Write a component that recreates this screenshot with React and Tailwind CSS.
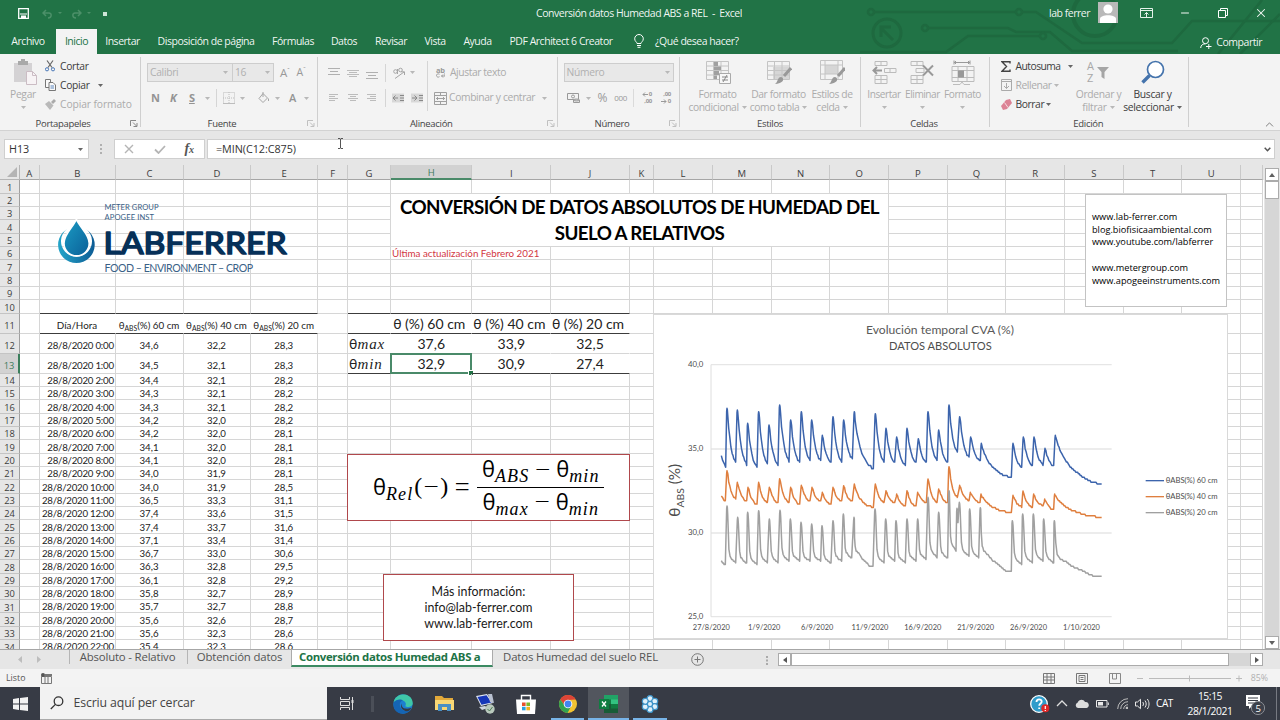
import React from "react";
import { Minus, X, ChevronUp } from "lucide-react";

const COLS = [
  ["A", "w-[19.5px]"], ["B", "w-[76.7px]"], ["C", "w-[67.5px]"], ["D", "w-[67.3px]"], ["E", "w-[67.2px]"],
  ["F", "w-[29.8px]"], ["G", "w-[43px]"], ["H", "w-[81.4px]"], ["I", "w-[78.8px]"], ["J", "w-[78.5px]"],
  ["K", "w-[24.5px]"], ["L", "w-[58.7px]"], ["M", "w-[58.7px]"], ["N", "w-[58.7px]"], ["O", "w-[58.7px]"],
  ["P", "w-[58.7px]"], ["Q", "w-[58.7px]"], ["R", "w-[58.7px]"], ["S", "w-[58.7px]"], ["T", "w-[58.7px]"],
  ["U", "w-[58.7px]"], ["", "w-[22.2px]"],
];

const DATA = [
  ["34,6", "32,2", "28,3"], ["34,5", "32,1", "28,3"], ["34,4", "32,1", "28,2"], ["34,3", "32,1", "28,2"],
  ["34,3", "32,1", "28,2"], ["34,2", "32,0", "28,2"], ["34,2", "32,0", "28,1"], ["34,1", "32,0", "28,1"],
  ["34,1", "32,0", "28,1"], ["34,0", "31,9", "28,1"], ["34,0", "31,9", "28,5"], ["36,5", "33,3", "31,1"],
  ["37,4", "33,6", "31,5"], ["37,4", "33,7", "31,6"], ["37,1", "33,4", "31,4"], ["36,7", "33,0", "30,6"],
  ["36,3", "32,8", "29,5"], ["36,1", "32,8", "29,2"], ["35,8", "32,7", "28,9"], ["35,7", "32,7", "28,8"],
  ["35,6", "32,6", "28,7"], ["35,6", "32,3", "28,6"], ["35,4", "32,3", "28,6"],
];

const SUMMARY = {
  11: { H: "θ (%) 60 cm", I: "θ (%) 40 cm", J: "θ (%) 20 cm" },
  12: { H: "37,6", I: "33,9", J: "32,5" },
  13: { H: "32,9", I: "30,9", J: "27,4" },
};

// each entry: [x of base, y of base, x of peak, y of peak]
const S60 = [[227,379,231,205],[257,368,262,210],[290,374,293,250],[321,383,326,215],[352,373,357,255],[384,374,389,195],[417,364,422,240],[449,368,454,215],[480,363,485,240],[512,363,517,286],[543,368,549,230],[575,368,581,240],[607,358,613,215],[670,387,676,221],[702,368,708,265],[734,368,740,291],[766,377,771,265],[798,368,805,296],[829,368,834,215],[861,363,866,270],[893,368,897,195],[922,338,929,230],[957,353,962,291],[991,363,994,310],[1084,412,1089,310],[1115,383,1120,291],[1147,378,1152,291],[1179,374,1185,325],[1211,378,1216,286]];
const S40 = [[226,484,231,392],[257,478,262,427],[290,484,294,442],[321,494,326,427],[352,488,358,442],[384,488,389,416],[417,488,422,442],[449,494,454,436],[480,484,486,442],[512,484,517,457],[543,494,549,442],[575,484,581,437],[607,484,613,432],[670,503,676,432],[702,488,708,452],[734,488,740,462],[766,499,771,452],[798,499,803,457],[829,488,834,417],[861,488,866,447],[893,488,897,380],[922,473,929,436],[957,483,961,457],[990,488,993,462],[1084,518,1089,466],[1115,500,1119,453],[1147,503,1151,462],[1179,497,1184,477],[1211,509,1214,462]];
const S20 = [[226,674,231,498],[257,669,263,532],[290,669,293,517],[321,674,326,512],[352,668,358,537],[384,668,390,511],[417,663,421,537],[449,663,453,547],[480,663,485,552],[512,663,516,557],[543,669,549,542],[575,663,580,522],[605,654,612,532],[669,679,675,507],[702,668,707,537],[734,663,738,542],[766,668,771,537],[798,663,803,537],[828,657,834,472],[861,653,866,517],[893,654,897,452],[918,633,921,505],[924,550,928,487],[957,648,959,507],[986,653,991,503],[1084,694,1087,542],[1115,673,1118,522],[1147,668,1150,522],[1179,663,1181,537],[1211,668,1213,542]];

const SLOW = [[0.1, 0.14], [0.2, 0.38], [0.32, 0.54], [0.45, 0.7], [0.6, 0.82], [0.78, 0.93], [0.92, 0.96], [1, 1]];
const FAST = [[0.08, 0.14], [0.16, 0.5], [0.22, 0.75], [0.35, 0.87], [0.55, 0.93], [0.75, 0.96], [1, 1]];
const LONG = [[0.04, 0.15], [0.1, 0.3], [0.18, 0.45], [0.3, 0.62], [0.4, 0.72], [0.5, 0.78], [0.6, 0.86], [0.75, 0.94], [0.86, 0.95], [0.92, 1], [1, 1]];
const LONG_FAST = [[0.03, 0.4], [0.06, 0.6], [0.11, 0.68], [0.25, 0.74], [0.4, 0.83], [0.6, 0.9], [0.75, 0.97], [0.86, 1], [1, 1]];

// readings have one decimal, so the curve moves in steps of 0,1 %
const STEP = 5.04;
const snap = (y) => 74 + Math.round((y - 74) / STEP) * STEP;

function trace(start, events, end, fast) {
  let d = `M${start[0]} ${start[1]}`;
  let prev = start;
  const fall = (to, first) => {
    const gap = to[0] - prev[0];
    const shape = first ? [[0.3, 0.4], [0.7, 0.8], [1, 1]] : gap > 50 ? (fast ? LONG_FAST : LONG) : fast ? FAST : SLOW;
    let t0 = 0;
    let f0 = 0;
    shape.forEach(([t, f]) => {
      const n = Math.max(1, Math.round(((t - t0) * gap) / 3));
      for (let k = 1; k <= n; k++) {
        const tt = t0 + ((t - t0) * k) / n;
        const ff = f0 + ((f - f0) * k) / n;
        d += `L${(prev[0] + gap * tt).toFixed(1)} ${snap(prev[1] + (to[1] - prev[1]) * ff).toFixed(1)}`;
      }
      t0 = t;
      f0 = f;
    });
  };
  events.forEach(([bx, by, px, py], i) => {
    fall([bx, by], i === 0);
    d += `L${px - 1} ${py + 8}L${px} ${py}L${px + 1} ${py + 4}`;
    prev = [px, py];
  });
  fall(end, false);
  return d;
}

function Logo() {
  return (
    <svg className="absolute left-[56px] top-[36px]" width="234" height="76" viewBox="56 201 234 76">
      <defs>
        <linearGradient id="drop" x1="0" y1="0" x2="1" y2="1">
          <stop offset="0" stopColor="#1b9cc4" />
          <stop offset="1" stopColor="#0a5f98" />
        </linearGradient>
        <linearGradient id="ring" x1="0" y1="0" x2="1" y2="0">
          <stop offset="0" stopColor="#25a5c9" />
          <stop offset="1" stopColor="#0d5c95" />
        </linearGradient>
      </defs>
      <path d="M62.8 232.5A18.3 18.3 0 1 0 90 232.5L86 229A15.5 15.5 0 1 1 67 229Z" fill="url(#ring)" />
      <path d="M76.4 219.3C72.5 228.5 64 234 64 243.3A12.6 12.6 0 0 0 89.2 243.3C89.2 234 80.3 228.5 76.4 219.3Z" fill="url(#drop)" stroke="#fff" strokeWidth="1.6" />
      <g fontFamily="Lato, sans-serif" fill="#3a6186">
        <text x="104.5" y="209.5" fontSize="7.6" textLength="54">METER GROUP</text>
        <text x="104.5" y="220" fontSize="7.6" textLength="49.5">APOGEE INST</text>
        <text x="104.5" y="272.2" fontSize="10.6" textLength="148.5">FOOD – ENVIRONMENT – CROP</text>
        <text x="103.5" y="253.9" fontSize="31.5" fill="#063058" stroke="#063058" strokeWidth="1.7" strokeLinejoin="round" textLength="183" lengthAdjust="spacingAndGlyphs">LABFERRER</text>
      </g>
    </svg>
  );
}

function Chart() {
  const dates = ["27/8/2020", "1/9/2020", "6/9/2020", "11/9/2020", "16/9/2020", "21/9/2020", "26/9/2020", "1/10/2020"];
  return (
    <div className="absolute left-[653px] top-[149px] w-[575px] h-[325px] bg-white border border-[#d9d9d9]">
      <svg className="block" width="573" height="323" viewBox="12 -75 1719 969" fontFamily="Lato, sans-serif" fill="#4d4d4d">
        <text x="648" y="-19" fontSize="36" textLength="444" lengthAdjust="spacingAndGlyphs" fill="#595959">Evolución temporal CVA (%)</text>
        <text x="717" y="29" fontSize="35" textLength="308" lengthAdjust="spacingAndGlyphs">DATOS ABSOLUTOS</text>
        {[74, 327, 579, 830].map((y) => (
          <path key={y} d={`M183 ${y}H1385`} stroke="#e6e6e6" strokeWidth="4" />
        ))}
        <path d="M183 74V830" stroke="#dedede" strokeWidth="3" />
        {["40,0", "35,0", "30,0", "25,0"].map((t, i) => (
          <text key={t} x="114" y={81 + i * 252} fontSize="22" textLength="46" lengthAdjust="spacingAndGlyphs">{t}</text>
        ))}
        {dates.map((t, i) => (
          <text key={t} x={184 + i * 158.6} y="869" fontSize="22" textAnchor="middle" textLength={t.length === 9 ? 111 : 97} lengthAdjust="spacingAndGlyphs">{t}</text>
        ))}
        <text transform="translate(91 530) rotate(-90)" fontSize="46">
          θ<tspan fontSize="31" dy="10">ABS</tspan><tspan dy="-10"> (%)</tspan>
        </text>
        <g fill="none" strokeWidth="4.5" strokeLinejoin="round">
          <path d={trace([214, 347], S60, [1355, 433], false)} stroke="#3c64ac" />
          <path d={trace([214, 468], S40, [1355, 533], false)} stroke="#df7f3f" />
          <path d={trace([214, 662], S20, [1355, 709], true)} stroke="#a0a0a0" />
        </g>
        {[["60", "#3c64ac"], ["40", "#df7f3f"], ["20", "#a0a0a0"]].map(([n, c], i) => (
          <g key={n}>
            <path d={`M1487 ${422 + i * 48}H1542`} stroke={c} strokeWidth="4" />
            <text x="1547" y={430 + i * 48} fontSize="22" textLength="156" lengthAdjust="spacingAndGlyphs">θABS(%) {n} cm</text>
          </g>
        ))}
      </svg>
    </div>
  );
}

function Sub({ base, children }) {
  return (
    <span className="inline-flex items-baseline">
      <span className="font-['Open_Sans',sans-serif] text-[22px]">{base}</span>
      <span className="relative top-[5px] font-['Liberation_Serif',serif] italic text-[18px] tracking-[0.06em]">{children}</span>
    </span>
  );
}

function Bar({ w }) {
  return <span className={`${w} text-center text-[27px] leading-[20px] font-light font-['Open_Sans',sans-serif]`}>−</span>;
}

function Equation() {
  return (
    <div className="absolute left-[347px] top-[289px] w-[283px] h-[67px] bg-white border border-[#b0484c] flex items-center pl-[25px] text-black leading-none whitespace-nowrap">
      <div className="flex items-center -mt-[3px]">
        <Sub base="θ">Rel</Sub>
        <span className="w-[36px] flex items-center justify-center font-['Liberation_Serif',serif] text-[24px] leading-none">(<Bar w="w-[18px]" />)</span>
        <span className="w-[26px] text-center font-['Open_Sans',sans-serif] text-[27px] font-light">=</span>
      </div>
      <div className="ml-[2px] w-[127px] shrink-0 flex flex-col items-center">
        <div className="h-[32px] w-full flex justify-center items-center gap-[5px] border-b border-black pb-[6px]">
          <Sub base="θ">ABS</Sub><Bar w="w-[17px]" /><Sub base="θ">min</Sub>
        </div>
        <div className="h-[31px] flex justify-center items-center gap-[5px] pb-[5px]">
          <Sub base="θ">max</Sub><Bar w="w-[17px]" /><Sub base="θ">min</Sub>
        </div>
      </div>
    </div>
  );
}

function Cell({ row, col, w }) {
  const inTable = "GHIJ".includes(col) && col && row >= 11 && row <= 13;
  const inData = "BCDE".includes(col) && col;
  const dark =
    (row === 10 && (inData || ("GHIJ".includes(col) && col))) ||
    (row === 11 && (inData || inTable)) || (row === 13 && inTable);
  let text = null;
  let cls = "justify-center";
  if (inData && row >= 12) {
    const i = row - 12;
    text = col === "B" ? `28/8/2020 ${i}:00` : DATA[i]["CDE".indexOf(col)];
    cls = (col === "B" ? "justify-end pr-[1.5px] text-[9.7px] tracking-[-0.025em]" : "justify-center pr-[1px] text-[9.7px]") + (row < 14 ? " pt-[6px]" : " pt-[2px]");
  } else if (inData && row === 11) {
    cls = "justify-center pt-[6px] pr-[1px] text-[9.8px]";
    text = col === "B" ? "Día/Hora" : (
      <span>θ<sub className="text-[6.8px]">ABS</sub>(%) {{ C: 60, D: 40, E: 20 }[col]} cm</span>
    );
  } else if (inTable && col === "G" && row > 11) {
    cls = "justify-start pl-[1px] pt-[2px] text-[14px]";
    text = <span>θ<i className="font-['Liberation_Serif',serif] text-[15px] tracking-[0.06em]">{row === 12 ? "max" : "min"}</i></span>;
  } else if (inTable) {
    cls = "justify-center pt-[2px] text-[14px]" + (row === 11 ? " pr-[4px]" : "");
    text = SUMMARY[row][col];
  } else if (row === 6 && col === "H") {
    cls = "justify-start pl-[1px] pt-[2px] text-[9.8px] text-[#d2373f]";
    text = "Última actualización Febrero 2021";
  }
  return (
    <div className={`${w} shrink-0 border-b border-r relative flex items-center whitespace-nowrap leading-none ${inTable || (row === 6 && col === "H") || (row === 11 && inData) ? "border-r-transparent" : "border-r-[#d6d6d6]"} ${dark ? "border-b-[#3c3c3c]" : "border-b-[#d6d6d6]"} ${cls}`}>
      {text}
      {row === 13 && col === "H" && (
        <div className="absolute -left-[1px] -top-[1px] -right-[1px] -bottom-[1px] border-2 border-[#4a8a69]">
          <div className="absolute -right-[3px] -bottom-[3px] w-[4px] h-[4px] bg-[#217346] outline outline-white" />
        </div>
      )}
    </div>
  );
}

function Sheet() {
  const rows = Array.from({ length: 34 }, (_, i) => i + 1);
  return (
    <div className="relative h-[484px] flex overflow-hidden bg-[#e6e6e6]">
      <div className="w-[1263.5px] bg-white text-[#222] font-['Lato',sans-serif]">
        <div className="flex h-[15.3px] bg-[#e6e6e6] font-['Open_Sans',sans-serif] text-[9.5px] text-[#3c3c3c]">
          <div className="w-[20.1px] shrink-0 border-b border-r border-[#b5b5b5] flex justify-end items-end p-[2px]">
            <svg width="10" height="10"><path d="M10 0V10H0Z" fill="#b4b4b4" /></svg>
          </div>
          {COLS.map(([c, w], i) => (
            <div key={i} className={`${w} shrink-0 border-r border-r-[#c9c9c9] flex items-center justify-center leading-none pt-[3px] ${c === "H" ? "bg-[#d2d2d2] text-[#3f7a5c] border-b-2 border-b-[#4a8a69]" : "border-b border-b-[#a6a6a6]"}`}>{c}</div>
          ))}
        </div>
        {rows.map((r) => (
          <div key={r} className={`flex ${r >= 11 && r <= 13 ? "h-[20px]" : "h-[13.333px]"}`}>
            <div className={`w-[20.1px] shrink-0 border-b border-b-[#c4c4c4] flex items-center justify-center leading-none font-['Open_Sans',sans-serif] text-[9.3px] text-[#3c3c3c] ${r === 13 ? "bg-[#d2d2d2] text-[#3f7a5c] border-r-2 border-r-[#3b7f5c]" : "bg-[#e6e6e6] border-r border-r-[#9f9f9f]"} ${r >= 11 && r <= 13 ? "pt-[6px]" : "pt-[2px]"}`}>{r}</div>
            {COLS.map(([c, w], i) => <Cell key={i} row={r} col={c} w={w} />)}
          </div>
        ))}
      </div>

      {/* vertical scrollbar */}
      <div className="w-[14px] ml-[1.5px] flex flex-col bg-[#d6d6d6] mt-[3px]">
        <div className="h-[13px] bg-white border border-[#ababab] flex items-center justify-center">
          <svg width="6" height="4"><path d="M0 4L3 0L6 4Z" fill="#606060" /></svg>
        </div>
        <div className="h-[18px] bg-white border border-[#ababab]" />
        <div className="mt-auto h-[13px] bg-white border border-[#ababab] flex items-center justify-center">
          <svg width="6" height="4"><path d="M0 0L3 4L6 0Z" fill="#606060" /></svg>
        </div>
      </div>

      {/* floating objects over the cells */}
      <Logo />
      <div className="absolute left-[391px] top-[29px] w-[497px] h-[52px] bg-white font-['Lato',sans-serif] font-bold text-[18.8px] leading-[26.4px] text-center text-black whitespace-nowrap tracking-[-0.032em]">
        CONVERSIÓN DE DATOS ABSOLUTOS DE HUMEDAD DEL<br />SUELO A RELATIVOS
      </div>
      <div className="absolute left-[1085px] top-[29px] w-[142px] h-[113px] bg-white border border-[#c3c3c3] pl-[6px] pt-[16px] font-['Open_Sans',sans-serif] text-[9.2px] leading-[12.7px] text-black whitespace-nowrap">
        www.lab-ferrer.com<br />blog.biofisicaambiental.com<br />www.youtube.com/labferrer<br /><br />www.metergroup.com<br />www.apogeeinstruments.com
      </div>
      <Chart />
      <Equation />
      <div className="absolute left-[383px] top-[409px] w-[191px] h-[67px] bg-white border border-[#b0484c] font-['Lato',sans-serif] text-[12.4px] leading-[16px] text-[#1a1a1a] text-center pt-[9px]">
        Más información:<br />info@lab-ferrer.com<br />www.lab-ferrer.com
      </div>
    </div>
  );
}

function Caret({ dark, className = "" }) {
  return <svg className={`shrink-0 ${className}`} width="5" height="3"><path d="M0 0H5L2.5 3Z" fill={dark ? "#666" : "#b8b8b8"} /></svg>;
}

function Launcher({ dark }) {
  return (
    <svg width="8" height="7" viewBox="0 0 8 7" fill="none" stroke={dark ? "#888" : "#c0c0c0"}>
      <path d="M.5 6V.5H6M3 2.5L6.5 6M7 3V6.5H3.5" />
    </svg>
  );
}

function Group({ w, label, children, launcher, dark, labelCls = "" }) {
  return (
    <div className={`${w} shrink-0 flex flex-col h-[76px] relative`}>
      <div className="h-[62px] flex">{children}</div>
      <div className="h-[14px] pt-[2px] flex items-center justify-center text-[9.5px] text-[#444] leading-none relative">
        <span className={labelCls}>{label}</span>
        {launcher && <span className="absolute right-[3px] top-[4px]"><Launcher dark={dark} /></span>}
      </div>
      <div className="absolute right-0 top-[3px] h-[70px] w-px bg-[#cfcfcf]" />
    </div>
  );
}

function BigButton({ w, icon, l1, l2, dark, caret = true }) {
  return (
    <div className={`${w} shrink-0 flex flex-col items-center pt-[3px] leading-[13px] whitespace-nowrap ${dark ? "text-[#3c3c3c]" : "text-[#ababab]"}`}>
      <div className="h-[30px] mb-[1px] flex items-center">{icon}</div>
      <div>{l1}</div>
      <div className="h-[13px] flex items-center gap-[3px]">{l2}{caret && <Caret dark={dark} />}</div>
    </div>
  );
}

const Align = ({ d, c = "#bcbcbc" }) => <svg width="12" height="12" fill="none" stroke={c}><path d={d} /></svg>;

function Ribbon() {
  return (
    <div className="h-[77px] shrink-0 bg-[#f3f3f3] border-b border-[#d2d2d2] flex relative text-[10.3px] tracking-[-0.03em] text-[#3c3c3c]">
      <Group w="w-[141px]" label="Portapapeles" launcher dark labelCls="mr-[15px]">
        <div className="w-[46px] flex flex-col items-center pt-[5px] text-[#ababab]">
          <svg width="26" height="27" viewBox="0 0 26 27" className="ml-[4px]">
            <path d="M2 4H20V23H2Z" fill="#d4d2d4" />
            <path d="M6 2H9V0H13V2H16V6H6Z" fill="#a9a9a9" />
            <path d="M14.5 12.5H20.5L24.5 16.5V25.5H14.5Z" fill="#f7f3f5" stroke="#cbbcc4" />
            <path d="M20.5 12.5V16.5H24.5" fill="none" stroke="#cbbcc4" />
          </svg>
          <span className="leading-[14px] mt-[1px]">Pegar</span>
          <Caret className="mt-[5px]" />
        </div>
        <div className="flex flex-col pt-[2.5px] leading-[19.2px] whitespace-nowrap">
          <div className="flex items-center gap-[5px]">
            <svg className="-ml-[1px]" width="10" height="12" viewBox="0 0 10 12" fill="none"><path d="M2 .5L7 7.5M8 .5L3 7.5" stroke="#666" strokeWidth="1.2" /><circle cx="2" cy="9.3" r="1.6" stroke="#4a78b8" /><circle cx="8" cy="9.3" r="1.6" stroke="#4a78b8" /></svg>
            Cortar
          </div>
          <div className="flex items-center gap-[4px]">
            <svg className="-ml-[1px]" width="11" height="12" viewBox="0 0 11 12" fill="#fafafa" stroke="#777"><path d="M.5.5H5.5V8.5H.5Z" /><path d="M4 3.5H8L10.5 6V11.5H4Z" /><path d="M5.5 7H9M5.5 9H9" stroke="#5d87bf" /></svg>
            Copiar <Caret dark className="ml-[4px]" />
          </div>
          <div className="flex items-center gap-[4px] text-[#ababab] tracking-[-0.01em]">
            <svg className="-ml-[1px]" width="11" height="11" viewBox="0 0 11 11"><path d="M6 3L9 0L11 2L8 5Z" fill="#aaa" /><path d="M0 5L4 2L8.5 6.5L5 11Z" fill="#b9b9b9" /></svg>
            Copiar formato
          </div>
        </div>
      </Group>

      <Group w="w-[177px]" label="Fuente" launcher labelCls="mr-[15px]">
        <div className="flex flex-col pl-[6px] pt-[9px] text-[#b0b0b0]">
          <div className="flex items-center h-[19px]">
            <div className="w-[86px] h-[19px] bg-[#e8e8e8] border border-[#cdcdcd] flex items-center justify-between pl-[2px] pr-[4px]">Calibri<Caret /></div>
            <div className="w-[41px] h-[19px] bg-[#e8e8e8] border border-l-0 border-[#cdcdcd] flex items-center justify-between pl-[2px] pr-[3px]">16<Caret /></div>
            <span className="ml-[6px] text-[11.5px] text-[#999]">A<sup className="text-[7px]">ˆ</sup></span>
            <span className="ml-[7px] text-[10.5px] text-[#999]">A<sup className="text-[7px]">ˇ</sup></span>
          </div>
          <div className="flex items-center h-[18px] mt-[7px] text-[11px] text-[#949494]">
            <b className="ml-[4px] w-[19px]">N</b>
            <b className="italic w-[19px]">K</b>
            <b className="underline w-[16px]">S</b>
            <Caret />
            <i className="w-px h-[18px] bg-[#d5d5d5] ml-[6px]" />
            <svg className="ml-[6px]" width="12" height="12" fill="none" stroke="#bdbdbd"><path d="M.5.5H11.5V11.5H.5ZM6 0V12M0 6H12" strokeDasharray="1 1" /><path d="M0 11.5H12" /></svg>
            <Caret className="ml-[5px]" />
            <svg className="ml-[13px]" width="12" height="12" fill="none" stroke="#a5a5a5"><path d="M5 1.5L9.5 6L5 10.5L1 6.5ZM5 5V0M10.5 6.5V9" /></svg>
            <Caret className="ml-[5px]" />
            <span className="ml-[9px] font-semibold">A</span>
            <Caret className="ml-[8px]" />
          </div>
        </div>
      </Group>

      <Group w="w-[239.5px]" label="Alineación" launcher labelCls="mr-[13px]">
        <div className="flex flex-col pl-[10px] pt-[9px] w-[112px] shrink-0">
          <div className="flex items-center h-[19px] gap-[7px]">
            <Align d="M0 1.5H12M2 4.5H10M0 7.5H12" c="#b0b0b0" />
            <Align d="M0 3.5H12M2 5.5H10M0 7.5H12M2 9.5H10" />
            <Align d="M0 5.5H12M2 8.5H10M0 11.5H12" c="#b0b0b0" />
            <i className="w-px h-[18px] bg-[#d5d5d5]" />
            <svg width="13" height="12" fill="none" stroke="#a5a5a5"><circle cx="2.5" cy="4.5" r="1.8" /><path d="M4.5 2V7" /><circle cx="7.5" cy="3" r="1.8" /><path d="M2 11.5L11 5M8 4.8L11.5 4.8V8" /></svg>
            <Caret className="-ml-[3px]" />
          </div>
          <div className="flex items-center h-[18px] mt-[7px] gap-[7px]">
            <Align d="M1 2.5H10M1 4.5H7M1 6.5H10M1 8.5H7" />
            <Align d="M1 2.5H11M3 4.5H9M1 6.5H11M3 8.5H9" />
            <Align d="M1 2.5H10M4 4.5H10M1 6.5H10M4 8.5H10" />
            <i className="w-px h-[18px] bg-[#d5d5d5]" />
            <svg className="-ml-[1px]" width="12" height="12" fill="none"><path d="M0 1.5H12V10.5H0Z" fill="#d8d8d8" /><path d="M6 6H1M3.5 3.5L1 6L3.5 8.5M8 3.5H12M8 6H12M8 8.5H12" stroke="#888" /></svg>
            <svg width="12" height="12" fill="none"><path d="M0 1.5H12V10.5H0Z" fill="#d8d8d8" /><path d="M1 6H6M3.5 3.5L6 6L3.5 8.5M8 3.5H12M8 6H12M8 8.5H12" stroke="#888" /></svg>
          </div>
        </div>
        <div className="flex mt-[7px] h-[50px] w-px bg-[#d5d5d5] -ml-[3px] mr-[2px]" />
        <div className="flex flex-col pt-[9px] text-[#ababab] whitespace-nowrap">
          <div className="flex items-center h-[19px] pl-[6px]">
            <span className="flex flex-col text-[7.5px] font-bold text-[#9a9a9a] w-[14px]">
              <span className="leading-[7px] h-[6px]">ab</span>
              <svg width="9" height="5" fill="none" stroke="#9a9a9a"><path d="M3.5 1.2C1.5.2.5 1.5.5 2.5C.5 3.7 2 4.7 3.5 3.7M9 0V3H5.5M7 1.5L5.5 3L7 4.5" /></svg>
            </span>
            <span className="tracking-[-0.04em]">Ajustar texto</span>
          </div>
          <div className="flex items-center h-[18px] mt-[7px] pl-[4px]">
            <svg className="mr-[2px]" width="13" height="13" fill="none" stroke="#a0a0a0"><path d="M.5.5H12.5V12.5H.5ZM0 3.5H13M0 9.5H13M6.5 0V3M6.5 10V13M2 6.5H11M4 5L2.5 6.5L4 8M9 5L10.5 6.5L9 8" /></svg>
            <span className="tracking-[-0.035em] w-[85px]">Combinar y centrar</span> <Caret className="ml-[8px]" />
          </div>
        </div>
      </Group>

      <Group w="w-[122px]" label="Número" launcher labelCls="mr-[13px]">
        <div className="flex flex-col pl-[6px] pt-[9px] text-[#b0b0b0]">
          <div className="w-[110px] h-[19px] bg-[#e8e8e8] border border-[#cdcdcd] flex items-center justify-between pl-[2px] pr-[3px]">Número<Caret /></div>
          <div className="flex items-center h-[18px] mt-[7px] text-[#999]">
            <svg className="ml-[3px]" width="13" height="12" fill="none" stroke="#999"><path d="M.5 1.5H11.5V7.5H.5Z" /><circle cx="6" cy="4.5" r="1.5" /><ellipse cx="9.5" cy="8" rx="3" ry="1" fill="#ccc" /><path d="M6.5 8V10.5H12.5V8" /></svg>
            <Caret className="ml-[6px]" />
            <span className="ml-[7px] text-[12px]">%</span>
            <span className="ml-[7px] text-[8px]">000</span>
            <i className="w-px h-[18px] bg-[#dadada] ml-[6px]" />
            <div className="ml-[7px] w-[11px] flex flex-col items-end text-[6px] leading-[7px] font-bold">
              <div className="flex items-center gap-[1px]"><svg width="6" height="5" fill="none" stroke="#999"><path d="M6 2.5H1M3 .5L1 2.5L3 4.5" /></svg>0</div>
              <div>,00</div>
            </div>
            <div className="ml-[8px] w-[11px] flex flex-col items-end text-[6px] leading-[7px] font-bold">
              <div>,00</div>
              <div className="flex items-center gap-[1px]"><svg width="6" height="5" fill="none" stroke="#999"><path d="M0 2.5H5M3 .5L5 2.5L3 4.5" /></svg>0</div>
            </div>
          </div>
        </div>
      </Group>

      <Group w="w-[181px]" label="Estilos">
        <div className="flex pl-[6.5px] tracking-[-0.04em]">
          <BigButton w="w-[63px]" l1="Formato" l2="condicional" icon={
            <svg width="26" height="25" viewBox="0 0 26 25" fill="none" stroke="#c4c4c4"><path d="M1.5 1.5H23.5V19.5H1.5ZM1.5 6H23.5M1.5 10.5H23.5M1.5 15H23.5M8.5 1.5V19.5M16 1.5V19.5" /><path d="M9 2H13V6H9ZM9 6.5H16V10H9ZM9 11H14V15H9ZM9 15.5H12V19H9Z" fill="#a0a0a0" stroke="none" /><path d="M14.5 13.5H25.5V23.5H14.5Z" fill="#f8f8f8" stroke="#aaa" /><path d="M17 17H23M17 20H23M22 15L18 22" stroke="#888" /></svg>
          } />
          <BigButton w="w-[59px]" l1="Dar formato" l2="como tabla" icon={
            <svg width="26" height="25" viewBox="0 0 26 25" fill="none" stroke="#c4c4c4"><path d="M7 7H23V19H7Z" fill="#d6d6d6" stroke="none" /><path d="M1.5 1.5H23.5V19.5H1.5ZM1.5 6H23.5M1.5 10.5H23.5M1.5 15H23.5M8.5 1.5V19.5M16 1.5V19.5" /><path d="M25 8L18 16" stroke="#999" strokeWidth="3" /><path d="M8 24C12 24 11 17 15 17C19 18 18 24 8 24Z" fill="#999" stroke="none" /></svg>
          } />
          <BigButton w="w-[48px]" l1="Estilos de" l2="celda" icon={
            <svg width="26" height="25" viewBox="0 0 26 25" fill="none" stroke="#c4c4c4"><path d="M6 5H19V14H6Z" fill="#d6d6d6" stroke="none" /><path d="M1.5.5H23.5V19.5H1.5ZM1.5 5H23.5M1.5 14H23.5M6 .5V19.5M19 .5V19.5" /><path d="M26 8L19 16" stroke="#999" strokeWidth="3" /><path d="M9 24C13 24 12 17 16 17C20 18 19 24 9 24Z" fill="#999" stroke="none" /></svg>
          } />
        </div>
      </Group>

      <Group w="w-[129px]" label="Celdas" labelCls="-ml-[2px]">
        <div className="flex pl-[4.5px] text-[10.1px] tracking-[-0.045em]">
          <BigButton w="w-[38px]" l1="Insertar" l2="" icon={
            <svg width="25" height="25" viewBox="0 0 25 25" fill="none" stroke="#bcbcbc"><path d="M3 1.5H15V5.5H3ZM9 1.5V5.5M12.5 8.5H24V12.5H12.5ZM18 8.5V12.5M3 15.5H15V23.5H3ZM3 19.5H15M9 15.5V23.5" /><path d="M10 10.5H2M5 7L1.5 10.5L5 14" stroke="#999" strokeWidth="2" /></svg>
          } />
          <BigButton w="w-[39px]" l1="Eliminar" l2="" icon={
            <svg width="25" height="25" viewBox="0 0 25 25" fill="none" stroke="#bcbcbc"><path d="M1 1.5H13V5.5H1ZM7 1.5V5.5M6 8.5H14V12.5H6ZM1 15.5H13V23.5H1ZM1 19.5H13M7 15.5V23.5" /><path d="M13 5.5L23 15.5M23 5.5L13 15.5" stroke="#999" strokeWidth="2" /></svg>
          } />
          <BigButton w="w-[41px]" l1="Formato" l2="" icon={
            <svg width="24" height="25" viewBox="0 0 24 25" fill="none" stroke="#bcbcbc"><path d="M3 2.5H19M3 .5V4.5M19 .5V4.5M5 1L3.5 2.5L5 4M17 1L18.5 2.5L17 4" stroke="#999" /><path d="M1 6.5H23V21.5H1ZM1 10.5H23M1 17.5H23M7 6.5V21.5M16 6.5V21.5M2 24.5H9L11 22L13 24.5H19" /><path d="M7 10.5H13V17.5H7Z" fill="#999" stroke="none" /></svg>
          } />
        </div>
      </Group>

      <Group w="w-[199.5px]" label="Edición" labelCls="-ml-[2px]">
        <div className="w-[85px] flex flex-col pt-[2.5px] pl-[11px] leading-[19.2px] whitespace-nowrap">
          <div className="flex items-center">
            <svg className="mr-[5px]" width="10" height="11" fill="none" stroke="#444" strokeWidth="1.4"><path d="M9 2.5V.8H1L5.5 5.5L1 10.2H9V8.5" /></svg>
            <span className="tracking-[-0.05em]">Autosuma</span> <Caret dark className="ml-[7px]" />
          </div>
          <div className="flex items-center text-[#ababab] tracking-[-0.04em]">
            <svg className="mr-[4px]" width="11" height="12" fill="none" stroke="#aaa"><path d="M.5.5H10.5V11.5H.5ZM0 2.5H11M5.5 4V9.5M3 7L5.5 9.5L8 7" /></svg>
            Rellenar <Caret className="ml-[2px]" />
          </div>
          <div className="flex items-center tracking-[-0.04em]">
            <svg className="mr-[4px]" width="11" height="11"><path d="M5 1L9 0L11 4L6 10L2 11L0 7Z" fill="#dc8295" /><path d="M3.5 3.5L7 8.5" stroke="#f6dbe0" /></svg>
            Borrar <Caret dark className="ml-[2px]" />
          </div>
        </div>
        <BigButton w="w-[48px]" l1="Ordenar y" l2="filtrar" icon={
          <div className="flex items-center">
            <div className="flex flex-col text-[11px] leading-[12px] text-[#a8a8a8] mr-[3px] tracking-normal"><div className="h-[12px]">A</div><div className="h-[12px]">Z</div></div>
            <svg width="13" height="13" viewBox="12 5 13 13"><path d="M12 6H24L19.5 11V18L16.5 16V11Z" fill="#a5a5a5" /></svg>
          </div>
        } />
        <BigButton w="w-[60px]" dark l1="Buscar y" l2="seleccionar" icon={
          <svg width="24" height="25" viewBox="0 0 24 25" fill="none"><circle cx="14.5" cy="9.5" r="8" fill="#fff" stroke="#4473ac" strokeWidth="1.7" /><path d="M8.5 15.5L1.5 22.5" stroke="#4473ac" strokeWidth="3.4" /></svg>
        } />
      </Group>
      <ChevronUp className="ml-auto mr-[4px] mt-[64px]" size={13} strokeWidth={1.5} color="#666" />
    </div>
  );
}

const TABS = [
  ["Archivo", "w-[56px]"], ["Inicio", "w-[41px]"], ["Insertar", "w-[51px]"], ["Disposición de página", "w-[116px]"],
  ["Fórmulas", "w-[58px]"], ["Datos", "w-[44px]"], ["Revisar", "w-[50px]"], ["Vista", "w-[38px]"],
  ["Ayuda", "w-[47px]"], ["PDF Architect 6 Creator", "w-[120px]"],
];

function TitleBar() {
  return (
    <div className="h-[54px] shrink-0 bg-[#217346] text-white/95 relative overflow-hidden text-[10.5px] tracking-[-0.045em]">
      <svg className="absolute right-0 top-0" width="430" height="54" viewBox="850 0 430 54" fill="none" stroke="#1e693f" strokeWidth="2.6">
        <circle cx="887" cy="33" r="14" strokeWidth="3" />
        <path d="M893 40L881 28M881 37V27H891" strokeWidth="3" />
        <circle cx="871" cy="12" r="3" /><path d="M874 12H1016" /><circle cx="1019" cy="12" r="3" /><path d="M1022 12H1036L1082 43H1172L1192 21H1280" />
        <circle cx="925" cy="28" r="3" /><path d="M928 28H1008L1016 32H1050L1072 51H1178" />
        <path d="M860 52H946L968 36H1040" /><circle cx="1043" cy="36" r="3" />
        <circle cx="1095" cy="14" r="22" strokeWidth="4" />
        <path d="M1218 54L1262 0M1240 54L1280 14" />
      </svg>
      <div className="relative h-[28.5px] flex items-center">
        <div className="w-[536px] flex items-center pl-[18px] pb-[1px]">
          <svg width="11" height="11" viewBox="0 0 11 11"><path d="M.7.7H10.3V10.3H.7Z" fill="none" stroke="#fff" strokeWidth="1.3" /><path d="M2 5.5H9V6.5H2ZM3 7.5H8V11H3Z" fill="#fff" /></svg>
          <svg className="ml-[13px]" width="11" height="10" fill="none" stroke="#4c9069" strokeWidth="1.5"><path d="M4 1L1 4L4 7M1 4H7C10 4 10 9 6 9" /></svg>
          <svg className="ml-[5px] -mt-[2px]" width="4" height="2"><path d="M0 0H4L2 2Z" fill="#4c9069" /></svg>
          <svg className="ml-[9px]" width="11" height="10" fill="none" stroke="#4c9069" strokeWidth="1.5"><path d="M7 1L10 4L7 7M10 4H4C1 4 1 9 5 9" /></svg>
          <svg className="ml-[5px] -mt-[2px]" width="4" height="2"><path d="M0 0H4L2 2Z" fill="#4c9069" /></svg>
          <svg className="ml-[12px] mt-[1px]" width="4" height="4"><path d="M0 0H4V4H0Z" fill="#cfe5d8" /></svg>
        </div>
        <div className="w-[207px] whitespace-pre">Conversión datos Humedad ABS a REL  -  Excel</div>
        <div className="ml-[306px] w-[49px]">lab ferrer</div>
        <svg className="mb-[3px]" width="20" height="21" viewBox="0 0 20 21"><path d="M0 0H20V21H0Z" fill="#b9b9b9" /><circle cx="10" cy="7" r="4.6" fill="#fff" /><path d="M2 21V17C2 12 18 12 18 17V21Z" fill="#fff" /></svg>
        <svg className="ml-[22px] mb-[3px]" width="13" height="10" fill="none" stroke="#e6f2ea"><path d="M.5.5H12.5V9.5H.5ZM0 2.5H13M6.5 9V4.5M4.5 6.5L6.5 4.5L8.5 6.5" /></svg>
        <Minus className="ml-[26px] mb-[3px]" size={12} strokeWidth={2} />
        <svg className="ml-[27px] mb-[3px]" width="10" height="10" fill="none" stroke="#fff"><path d="M.5 2.5H7.5V9.5H.5ZM2.5 2.5V.5H9.5V7.5H7.5" /></svg>
        <X className="ml-[26px] mb-[3px]" size={14} strokeWidth={1.8} />
      </div>
      <div className="relative h-[25.5px] flex items-center">
        {TABS.map(([t, w]) => (
          <div key={t} className={`${w} h-full pt-[1px] shrink-0 flex items-center justify-center whitespace-nowrap ${t === "Inicio" ? "bg-[#f3f3f3] text-[#217346]" : ""}`}>{t}</div>
        ))}
        <svg className="ml-[13px]" width="10" height="14" viewBox="0 0 10 14" fill="none" stroke="#fff"><path d="M3 9.5C3 8 .7 7.4.7 4.8A4.3 4.3 0 0 1 9.3 4.8C9.3 7.4 7 8 7 9.5ZM3 11.5H7M3.5 13.3H6.5" /></svg>
        <span className="ml-[11px] pt-[1px]">¿Qué desea hacer?</span>
        <svg className="ml-auto mr-[4px] mt-[3px]" width="12" height="12" fill="none" stroke="#fff"><circle cx="5.5" cy="3.7" r="3" /><path d="M.7 11C.7 8 3 6.8 5.5 6.8M6 9.5H11.5M8.8 7V12" /></svg>
        <span className="mr-[18px] pt-[3px]">Compartir</span>
      </div>
    </div>
  );
}

function FormulaBar() {
  return (
    <div className="h-[34px] shrink-0 bg-[#e6e6e6] flex items-start pt-[8px] pl-[4px] text-[10.8px] tracking-[-0.005em] text-[#333] relative">
      <div className="w-[84.5px] h-[20px] bg-white border border-[#cfcfcf] flex items-center justify-between pl-[4px] pr-[5px]">H13<Caret dark /></div>
      <svg className="ml-[11px] mt-[5px]" width="3" height="10"><path d="M0 0H2V2H0ZM0 4H2V6H0ZM0 8H2V10H0Z" fill="#b0b0b0" /></svg>
      <div className="ml-[11px] w-[91px] h-[20px] bg-white border border-[#cfcfcf] flex items-center">
        <svg className="ml-[9px]" width="10" height="10" fill="none" stroke="#b5b5b5" strokeWidth="1.4"><path d="M1 1L9 9M9 1L1 9" /></svg>
        <svg className="ml-[20px]" width="12" height="9" fill="none" stroke="#b5b5b5" strokeWidth="1.8"><path d="M1 4.5L4.5 8L11 1" /></svg>
        <span className="ml-[19px] font-['Liberation_Serif',serif] font-bold italic text-[14px] leading-none text-[#555]">f<span className="text-[10px]">x</span></span>
      </div>
      <div className="ml-[2.5px] w-[1068px] h-[20px] bg-white border border-[#cfcfcf] flex items-center justify-between pl-[8px] pr-[3px]">
        <span>=MIN(C12:C875)</span>
        <svg width="7" height="5" fill="none" stroke="#555" strokeWidth="1.5"><path d="M.7.7L3.5 3.7L6.3.7" /></svg>
      </div>
      <svg className="absolute left-[337px] top-[7px]" width="7" height="11" fill="none" stroke="#555"><path d="M1 .5H3L3.5 1L4 .5H6M3.5 1V10M1 10.5H3L3.5 10L4 10.5H6" /></svg>
    </div>
  );
}

function SheetTabs() {
  return (
    <div className="h-[20px] shrink-0 bg-[#e6e6e6] border-t border-[#a6a6a6] flex items-start text-[11.4px] leading-[14px] text-[#555] tracking-[-0.015em] whitespace-nowrap">
      <svg className="mt-[6px] ml-[18px] shrink-0" width="24" height="7"><path d="M4 0V7L0 3.5ZM19 0V7L23 3.5Z" fill="#bdbdbd" /></svg>
      <div className="ml-[27px] w-[118px] h-[14px] border-l border-[#b5b5b5] text-center pr-[2px]">Absoluto - Relativo</div>
      <div className="w-[104px] h-[14px] border-l border-[#b5b5b5] text-center">Obtención datos</div>
      <div className="w-[202px] h-[17px] bg-white border-l border-r border-[#ababab] border-b-2 border-b-[#3b8a62] pl-[7px] text-[#217346] font-bold text-[11.4px] tracking-[-0.03em]">Conversión datos Humedad ABS a</div>
      <div className="w-[175px] text-center">Datos Humedad del suelo REL</div>
      <svg className="mt-[3px] ml-[23px] shrink-0" width="13" height="13" fill="none" stroke="#777"><circle cx="6.5" cy="6.5" r="5.8" /><path d="M6.5 3.5V9.5M3.5 6.5H9.5" /></svg>
      <svg className="mt-[6px] ml-[62px] shrink-0" width="3" height="9"><path d="M0 0H2V2H0ZM0 3.5H2V5.5H0ZM0 7H2V9H0Z" fill="#aaa" /></svg>
      <div className="ml-[9px] mt-[3px] w-[485px] h-[13px] flex bg-[#d6d6d6]">
        <div className="w-[13px] bg-white border border-[#ababab] flex items-center justify-center"><svg width="4" height="6"><path d="M4 0V6L0 3Z" fill="#555" /></svg></div>
        <div className="w-[438px] bg-white border border-[#ababab]" />
        <div className="ml-auto w-[13px] bg-white border border-[#ababab] flex items-center justify-center"><svg width="4" height="6"><path d="M0 0V6L4 3Z" fill="#555" /></svg></div>
      </div>
    </div>
  );
}

function StatusBar() {
  return (
    <div className="h-[18px] shrink-0 bg-[#f3f3f3] flex items-center text-[8.8px] text-[#555]">
      <span className="ml-[6px] pt-[1px]">Listo</span>
      <svg className="ml-[16px]" width="11" height="11" fill="none" stroke="#777"><path d="M.5 3.5H10.5V10.5H.5ZM4 4V10M7 4V10" /><path d="M4 2H11" strokeWidth="2" /><circle cx="2" cy="2" r="2" fill="#555" stroke="none" /></svg>
      <svg className="ml-auto" width="12" height="11" fill="none" stroke="#777"><path d="M.5.5H11.5V10.5H.5ZM0 4H12M0 7H12M4 0V11M8 0V11" /></svg>
      <svg className="ml-[21px]" width="12" height="11" fill="none" stroke="#777"><path d="M.5.5H11.5V10.5H.5ZM3 2.5H9V8.5H3ZM4.5 4.5H7.5M4.5 6.5H7.5" /></svg>
      <svg className="ml-[21px]" width="12" height="11" fill="none" stroke="#888"><path d="M.5.5H11.5V10.5H.5ZM3.5 0V6H7.5M7.5 0V6" /></svg>
      <svg className="ml-[16px]" width="106" height="9" fill="none" stroke="#bbb"><path d="M0 4.5H6M12 4.5H94M52.5 1.5V7.5M99 4.5H105M102 1.5V7.5" /></svg>
      <span className="ml-[8px] mr-[12px] pt-[1px] text-[#b0b0b0]">85%</span>
    </div>
  );
}

function TaskButton({ children, active, running }) {
  return (
    <div className={`w-[41.2px] h-full shrink-0 relative flex items-center justify-center ${active ? "bg-[#52565e]" : ""}`}>
      {children}
      {(running || active) && <div className={`absolute bottom-0 h-[2px] bg-[#78b4e8] ${active ? "inset-x-0" : "inset-x-[4px]"}`} />}
    </div>
  );
}

function Taskbar() {
  return (
    <div className="h-[33px] shrink-0 bg-[#373b45] flex items-center text-white">
      <div className="w-[40px] flex justify-center">
        <svg width="15" height="14" viewBox="0 0 15 14" fill="#f2f2f2"><path d="M0 2L6 1.1V6.6H0ZM7 1L15 0V6.6H7ZM0 7.4H6V12.9L0 12ZM7 7.4H15V14L7 13Z" /></svg>
      </div>
      <div className="w-[287px] h-[33px] bg-[#f2f2f2] border-b border-[#aaa] flex items-center text-[#444]">
        <svg className="ml-[10px]" width="14" height="14" fill="none" stroke="#333" strokeWidth="1.3"><circle cx="8.5" cy="5.2" r="4.3" /><path d="M5.4 8.4L.8 13" /></svg>
        <span className="ml-[9.5px] pt-[1px] text-[12.3px] tracking-[-0.01em]">Escriu aquí per cercar</span>
      </div>
      <div className="w-[55.3px] flex items-center pl-[13px]">
        <svg width="14" height="13" fill="none" stroke="#ddd"><path d="M.5 0V2.5H9.5V0M.5 13V10.5H9.5V13M.5 4.5H9.5V8.5H.5ZM12.5 0V13" /><path d="M12.5 3V6" strokeWidth="2" /></svg>
        <i className="ml-[17px] w-[3px] h-[16px] bg-[#4b4f58]" />
      </div>
      <TaskButton>
        <svg width="20" height="20" viewBox="0 0 20 20"><circle cx="10" cy="10" r="9.7" fill="#1c7fd0" /><path d="M.5 8.5C2 1 9 0 12 .6C18 1.7 20 6.5 19.7 10C19 13.5 14 13.3 12.3 12.2C14.5 8 10 6 7 6C4 6 1.5 7 .5 8.5Z" fill="#3fc7a8" /><path d="M.5 9C3 5 8 5 10 6.5C6 7.5 6 12 8.5 15C10.5 17.3 15 17.5 17.5 16C13 21.5 5 20.5 2 16C.5 13.5.2 11 .5 9Z" fill="#1565b5" /><path d="M9 9C8 11 9 14 12 14.6C15 15 17 14.5 18.5 13.6C17.7 15.5 16.5 16.7 15.5 17C10 18 6 13 9 9Z" fill="#373b45" /></svg>
      </TaskButton>
      <TaskButton>
        <svg width="19" height="17" viewBox="0 0 19 17"><path d="M0 1H7L9 3H18V15H0Z" fill="#e2a93a" /><path d="M0 5H19V15H0Z" fill="#f8d775" /><path d="M3 9H16V16H12V12H7V16H3Z" fill="#4a90c4" /></svg>
      </TaskButton>
      <TaskButton>
        <svg width="19" height="20" viewBox="0 0 19 20"><path d="M0 2L11 0L17 9L5 12Z" fill="#dfe5f0" /><path d="M1.5 3L10.5 1.3L15.5 8.5L5.5 10.7Z" fill="#1636b8" /><path d="M12 0H16L18 9L14 8Z" fill="#b8c0d0" /><path d="M3 13L9 12L12 14L6 16Z" fill="#cfd5df" /><circle cx="14" cy="15" r="4.7" fill="#b9c9bd" /><path d="M11.5 15L13.5 17L16.5 13" stroke="#4c7a55" fill="none" /></svg>
      </TaskButton>
      <TaskButton>
        <svg width="20" height="20" viewBox="0 0 20 20"><path d="M5.5 6V1.5H14.5V6" fill="none" stroke="#fff" strokeWidth="1.4" /><path d="M0 5.5H20L19 20H1Z" fill="#fff" /><path d="M6 8.5H9.6V12H6Z" fill="#e8502c" /><path d="M10.4 8.5H14V12H10.4Z" fill="#7db82d" /><path d="M6 12.8H9.6V16.3H6Z" fill="#2b9fe0" /><path d="M10.4 12.8H14V16.3H10.4Z" fill="#f4b31c" /></svg>
      </TaskButton>
      <TaskButton running>
        <svg width="18" height="18" viewBox="0 0 18 18"><circle cx="9" cy="9" r="9" fill="#f1c232" /><path d="M1.2 4.5A9 9 0 0 1 16.8 4.5L9 5L6 11Z" fill="#dc4437" /><path d="M1.2 4.5A9 9 0 0 0 8.5 18L12 11.5L6 11Z" fill="#32a350" /><circle cx="9" cy="9" r="4.3" fill="#fff" /><circle cx="9" cy="9" r="3.4" fill="#4385f0" /></svg>
      </TaskButton>
      <TaskButton active>
        <svg width="20" height="18" viewBox="0 0 20 18"><path d="M5 0H19V18H5Z" fill="#21a366" /><path d="M5 4.5H12V9H5Z" fill="#107c41" /><path d="M12 4.5H19V9H12Z" fill="#33c481" /><path d="M5 9H19V18H5Z" fill="#185c37" /><path d="M12 9H19V13.5H12Z" fill="#107c41" /><path d="M0 4H10V14H0Z" fill="#107c41" /><path d="M3 6.5L7 11.5M7 6.5L3 11.5" stroke="#fff" strokeWidth="1.3" /></svg>
      </TaskButton>
      <TaskButton running>
        <svg width="18" height="18" viewBox="0 0 18 18"><g fill="#dff0fa" stroke="#3d93c8" strokeWidth="1.2"><circle cx="9" cy="3.6" r="3" /><circle cx="13.7" cy="6.3" r="3" /><circle cx="13.7" cy="11.7" r="3" /><circle cx="9" cy="14.4" r="3" /><circle cx="4.3" cy="11.7" r="3" /><circle cx="4.3" cy="6.3" r="3" /><circle cx="9" cy="9" r="2.6" /></g></svg>
      </TaskButton>

      <div className="ml-auto flex items-center h-full">
        <svg width="20" height="18" viewBox="0 0 20 18"><circle cx="9" cy="9" r="8.3" fill="#2f9ccb" stroke="#fff" strokeWidth="1.3" /><path d="M6.5 7C6.5 3.5 11.8 3.6 11.7 6.8C11.6 8.5 9.2 8.7 9.2 10.8M9.2 12.5V14" stroke="#fff" strokeWidth="1.8" fill="none" /><circle cx="15.3" cy="13.3" r="4" fill="#dd2727" /><path d="M15.3 11V14M15.3 15V16" stroke="#fff" strokeWidth="1.2" /></svg>
        <svg className="ml-[6px]" width="12" height="7" fill="none" stroke="#ddd" strokeWidth="1.3"><path d="M1 6L6 1L11 6" /></svg>
        <svg className="ml-[7px]" width="14" height="9"><path d="M3 9A2.7 2.7 0 0 1 2.5 3.8C4 0 8.5 0 10 3C13 2.6 14 5 13.8 6.5C13.6 8 12.5 9 11.5 9Z" fill="#dcdcdc" /></svg>
        <svg className="ml-[7px]" width="13" height="9" fill="none" stroke="#e8e8e8"><path d="M.5 1.5H11V8H.5ZM12.3 3.5V6" /><path d="M2 3H7V6.5H2Z" fill="#e8e8e8" stroke="none" /></svg>
        <svg className="ml-[8px]" width="11" height="11" fill="none" stroke="#bbb"><path d="M.7 11A10.3 10.3 0 0 1 11 .7M3.7 11A7.3 7.3 0 0 1 11 3.7M6.7 11A4.3 4.3 0 0 1 11 6.7" /><circle cx="10" cy="10" r="1" fill="#fff" /></svg>
        <svg className="ml-[7px]" width="15" height="12" fill="none" stroke="#e8e8e8"><path d="M.5 4H2.5L5.5 1.3V10.7L2.5 8H.5ZM7.7 4C8.7 5 8.7 7 7.7 8M10 2.5C11.6 4.5 11.6 7.5 10 9.5M12.3 1C14.6 4 14.6 8 12.3 11" /></svg>
        <span className="ml-[6px] w-[20px] text-[10px] tracking-[-0.04em]">CAT</span>
        <div className="ml-[8px] w-[52px] text-center text-[10.3px] leading-[15px] tracking-[-0.04em]">15:15<br />28/1/2021</div>
        <svg className="ml-[8px]" width="22" height="24" viewBox="0 0 22 24"><path d="M2 3H16V14H8L5 17V14H2Z" fill="#fff" /><path d="M4 6H14M4 8.5H14M4 11H11" stroke="#373b45" /><circle cx="14" cy="16" r="6.6" fill="#3c404a" stroke="#8b8e94" /><text x="11.5" y="19.7" fontSize="9.5" fill="#fff" fontFamily="Open Sans, sans-serif">5</text></svg>
        <i className="ml-[10px] mr-[3px] w-px h-full bg-[#777a82]" />
      </div>
    </div>
  );
}

export default function App() {
  return (
    <div className="w-[1280px] h-[720px] flex flex-col overflow-hidden bg-[#e6e6e6] font-['Open_Sans',sans-serif]">
      <TitleBar />
      <Ribbon />
      <FormulaBar />
      <Sheet />
      <SheetTabs />
      <StatusBar />
      <Taskbar />
    </div>
  );
}
